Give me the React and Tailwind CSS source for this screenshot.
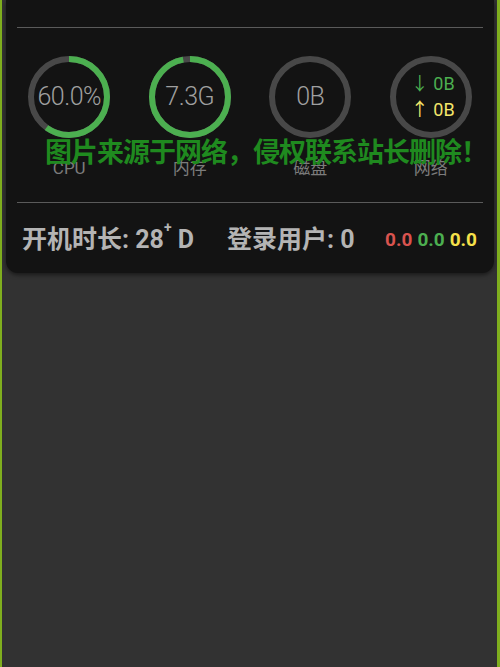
import React from "react";

const C = 2 * Math.PI * 38;

function Ring({ pct, children }) {
  return (
    <div className="relative w-[84px] h-[84px]">
      <svg width="84" height="84" viewBox="0 0 84 84" className="absolute inset-0 -rotate-90">
        <circle cx="42" cy="42" r="38" fill="none" stroke="#484848" strokeWidth="6" />
        {pct > 0 && (
          <circle
            cx="42"
            cy="42"
            r="38"
            fill="none"
            stroke="#4caf50"
            strokeWidth="6"
            strokeDasharray={`${(C * pct) / 100} ${C}`}
          />
        )}
      </svg>
      <div className="absolute inset-0 flex flex-col items-center justify-center">{children}</div>
    </div>
  );
}

const stats = [
  { label: "CPU", pct: 60, value: "60.0%" },
  { label: "内存", pct: 97, value: "7.3G" },
  { label: "磁盘", pct: 0, value: "0B" },
];

export default function App() {
  return (
    <div
      className="relative w-[500px] h-[667px] bg-[#323232] border-l-[2px] border-r-[3px] border-[#7fae1e] overflow-hidden"
      style={{ fontFamily: "Roboto, 'Noto Sans CJK SC', sans-serif" }}
    >
      {/* Status card */}
      <div className="ml-[4px] mr-[3px] bg-[#131313] rounded-b-[12px] pt-[27px] pb-[18px] px-[11px] shadow-[0_2px_4px_rgba(0,0,0,0.5)]">
        <div className="h-[1px] bg-[#5a5a5a]" />

        <div className="grid grid-cols-4 -mx-[8px] pt-[27px]">
          {stats.map(s => (
            <div key={s.label} className="flex flex-col items-center">
              <Ring pct={s.pct}>
                <span className="text-[25px] font-light text-[#a0a0a0] tracking-[-0.5px]">{s.value}</span>
              </Ring>
              <span className="mt-[19px] text-[17px] leading-[20px] text-[#7c7c7c]">{s.label}</span>
            </div>
          ))}
          <div className="flex flex-col items-center">
            <Ring pct={0}>
              <span className="text-[18px] leading-[26px] text-[#4caf50] ml-[4px]">↓ 0B</span>
              <span className="text-[18px] leading-[26px] text-[#f3e56a] ml-[4px]">↑ 0B</span>
            </Ring>
            <span className="mt-[19px] text-[17px] leading-[20px] text-[#7c7c7c]">网络</span>
          </div>
        </div>

        <div className="h-[1px] bg-[#5a5a5a] mt-[24px]" />

        <div className="flex items-center pt-[22px] pl-[5px]">
          <span className="text-[25px] leading-[30px] font-bold text-[#b4b4b4]">
            开机时长: 28<sup className="text-[14px] align-[9px]">+</sup> D
          </span>
          <span className="ml-[33px] text-[25px] leading-[30px] font-bold text-[#b4b4b4]">登录用户: 0</span>
          <span className="ml-auto mr-[6px] flex gap-[5px] text-[19px] font-bold">
            <span className="text-[#d9534f]">0.0</span>
            <span className="text-[#4caf50]">0.0</span>
            <span className="text-[#f5e04a]">0.0</span>
          </span>
        </div>
      </div>

      {/* watermark */}
      <div className="absolute left-[43px] top-[136px] text-[27px] leading-[34px] font-bold text-[#1f8a1f] whitespace-nowrap tracking-[-1px]">
        图片来源于网络，侵权联系站长删除！
      </div>
    </div>
  );
}
